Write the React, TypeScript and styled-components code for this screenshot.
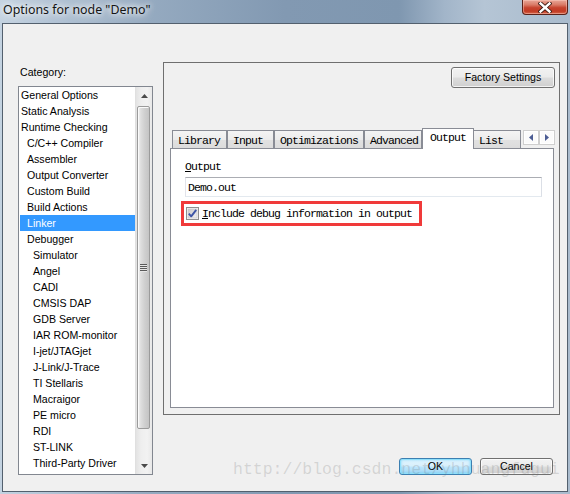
import React from "react";
import styled, { createGlobalStyle, css } from "styled-components";

const Global = createGlobalStyle`
  html, body { margin: 0; padding: 0; width: 570px; height: 494px; overflow: hidden; background: #a9bccf; }
  *, *::before, *::after { box-sizing: border-box; }
`;

const UI = `"Liberation Sans", Arial, sans-serif`;
const MONO = `"Liberation Mono", "Courier New", monospace`;

const Window = styled.div`
  position: relative;
  width: 570px;
  height: 494px;
  display: flex;
  flex-direction: column;
  padding: 0 2px 2px 2px;
  background: linear-gradient(
    90deg,
    #c4d3e1 0%,
    #b1c2d4 10%,
    #95aac0 26%,
    #8299b2 50%,
    #7f97b0 70%,
    #a2b5c9 78%,
    #b5c5d5 85%,
    #a9bbcd 100%
  );
`;

const TitleBar = styled.div`
  height: 23px;
  flex: none;
  display: flex;
  justify-content: space-between;
  align-items: flex-start;
`;

const Title = styled.div`
  padding-left: 1px;
  font-family: "Noto Sans", sans-serif;
  font-size: 12.4px;
  line-height: 20px;
  color: #151515;
  text-shadow: 0 0 8px #fff, 0 0 5px rgba(255, 255, 255, 0.9), 0 0 14px rgba(255, 255, 255, 0.7);
`;

const CloseButton = styled.div`
  width: 46px;
  height: 15px;
  display: flex;
  align-items: center;
  justify-content: center;
  border: 1px solid #5a2119;
  border-top: none;
  border-radius: 0 0 4px 4px;
  background: linear-gradient(180deg, #e9a798 0%, #d97a66 35%, #c7442f 55%, #c13b24 80%, #d8674b 100%);
  box-shadow: inset 0 0 0 1px rgba(255, 210, 200, 0.45);
`;

const Client = styled.div`
  flex: 1;
  display: flex;
  align-items: flex-start;
  gap: 10px;
  padding: 38px 7px 0 15px;
  background: #f0f0f0;
  border: 1px solid #53606e;
`;

const LeftCol = styled.div`
  width: 135px;
  flex: none;
  display: flex;
  flex-direction: column;
`;

const CategoryLabel = styled.div`
  height: 24px;
  padding: 3px 0 0 2px;
  font-family: ${UI};
  font-size: 10.6px;
  line-height: 14px;
  color: #000;
`;

const ListBox = styled.div`
  height: 389px;
  display: flex;
  background: #fff;
  border: 1px solid #828790;
`;

const Items = styled.div`
  flex: 1;
  overflow: hidden;
`;

const Item = styled.div<{ $level: number; $selected?: boolean }>`
  height: 16px;
  margin-left: 1px;
  padding-left: ${(p) => 1 + p.$level * 6}px;
  font-family: ${UI};
  font-size: 10.6px;
  line-height: 16px;
  white-space: nowrap;
  color: #000;
  ${(p) =>
    p.$selected &&
    css`
      background: #3399ff;
      color: #fff;
    `}
`;

const ScrollBar = styled.div`
  width: 17px;
  flex: none;
  display: flex;
  flex-direction: column;
  background: linear-gradient(90deg, #e3e3e3 0%, #eeeeee 30%, #f2f2f2 70%, #e8e8e8 100%);
  border-left: 1px solid #e0e0e0;
`;

const ScrollArrow = styled.div`
  height: 17px;
  flex: none;
  display: flex;
  align-items: center;
  justify-content: center;
`;

const Thumb = styled.div`
  height: 323px;
  margin: 2px 2px 0 1px;
  display: flex;
  align-items: center;
  justify-content: center;
  border: 1px solid #9b9b9b;
  border-radius: 2px;
  background: linear-gradient(90deg, #f4f4f4 0%, #dedede 25%, #d0d0d0 60%, #c4c4c4 100%);
  box-shadow: inset 1px 1px 0 #fafafa;
`;

const Grip = styled.div`
  width: 7px;
  height: 8px;
  background: repeating-linear-gradient(180deg, #5a5a5a 0px, #5a5a5a 1px, #e6e6e6 1px, #e6e6e6 2px);
`;

const Spacer = styled.div`
  flex: 1;
`;

const RightCol = styled.div`
  width: 397px;
  flex: none;
  display: flex;
  flex-direction: column;
`;

const GroupBox = styled.div`
  height: 353px;
  display: flex;
  flex-direction: column;
  padding: 4px 5px 6px 6px;
  border: 1px solid #6f6f6f;
`;

const PushButton = styled.button<{ $default?: boolean; $w: number; $h: number }>`
  width: ${(p) => p.$w}px;
  height: ${(p) => p.$h}px;
  padding: 0;
  font-family: ${UI};
  font-size: 10.6px;
  line-height: 1;
  color: #000;
  border: 1px solid #707070;
  border-radius: 3px;
  background: linear-gradient(180deg, #f2f2f2 0%, #ebebeb 48%, #dddddd 52%, #cfcfcf 100%);
  box-shadow: inset 0 0 0 1px rgba(255, 255, 255, 0.75);
  ${(p) =>
    p.$default &&
    css`
      border-color: #3c7fb1;
      background: linear-gradient(180deg, #e5f5fd 0%, #d6effc 48%, #bde5fc 52%, #a6d9f4 100%);
      box-shadow: inset 0 0 0 1px #8fe0fb, inset 0 0 3px 1px rgba(80, 200, 250, 0.6);
    `}
`;

const FactoryButton = styled(PushButton)`
  align-self: flex-end;
  margin-right: -1px;
`;

const TabArea = styled.div`
  margin-top: 40px;
  display: flex;
  flex-direction: column;
`;

const TabStrip = styled.div`
  position: relative;
  height: 20px;
  display: flex;
  align-items: flex-start;
  padding-left: 2px;
`;

const Tab = styled.div<{ $w: number; $active?: boolean }>`
  width: ${(p) => p.$w}px;
  height: 18px;
  margin-top: 2px;
  padding: 3px 0 0 5px;
  font-family: ${MONO};
  font-size: 11.5px;
  letter-spacing: -0.9px;
  line-height: 14px;
  color: #000;
  white-space: nowrap;
  overflow: hidden;
  border: 1px solid #898c95;
  border-bottom: none;
  background: linear-gradient(180deg, #f4f4f4 0%, #ececec 50%, #e1e1e1 51%, #dcdcdc 100%);
  ${(p) =>
    p.$active &&
    css`
      position: relative;
      z-index: 2;
      height: 21px;
      margin-top: 0;
      margin-right: -1px;
      padding: 2px 0 0 7px;
      background: #fff;
    `}
`;

const TabArrows = styled.div`
  position: absolute;
  top: 2px;
  right: -1px;
  display: flex;
  gap: 0;
  padding-left: 2px;
  background: #f0f0f0;
`;

const TabArrow = styled.div`
  width: 16px;
  height: 15px;
  display: flex;
  align-items: center;
  justify-content: center;
  border: 1px solid #cfcfcf;
  background: #fbfbfb;
  box-shadow: inset 0 0 0 1px #ffffff;
`;

const TabPage = styled.div`
  position: relative;
  z-index: 1;
  height: 260px;
  display: flex;
  flex-direction: column;
  align-items: flex-start;
  padding: 12px 0 0 10px;
  background: #fff;
  border: 1px solid #898c95;
`;

const FieldLabel = styled.div`
  margin-left: 4px;
  height: 12px;
  font-family: ${MONO};
  font-size: 11.5px;
  letter-spacing: -0.9px;
  line-height: 12px;
  color: #000;
`;

const TextInput = styled.div`
  width: 357px;
  height: 20px;
  margin: 4px 0 0 4px;
  padding: 3px 0 0 2px;
  font-family: ${MONO};
  font-size: 11.5px;
  letter-spacing: -0.9px;
  line-height: 13px;
  color: #000;
  border: 1px solid;
  border-color: #abadb3 #dbdfe6 #e3e9ef #e2e3ea;
  background: #fff;
`;

const Highlight = styled.div`
  width: 241px;
  height: 25px;
  margin-top: 4px;
  display: flex;
  align-items: center;
  gap: 3px;
  padding-left: 2px;
  border: 3px solid #f03a3a;
`;

const CheckLabel = styled.span`
  font-family: ${MONO};
  font-size: 11.5px;
  letter-spacing: -0.9px;
  line-height: 14px;
  color: #000;
  white-space: nowrap;
`;

const ButtonRow = styled.div`
  margin-top: 43px;
  display: flex;
  justify-content: flex-end;
  gap: 8px;
  padding-right: 7px;
`;

const Watermark = styled.div`
  position: absolute;
  left: 233px;
  top: 461px;
  font-family: ${MONO};
  font-size: 16.5px;
  line-height: 18px;
  color: rgba(110, 110, 110, 0.22);
  white-space: nowrap;
  pointer-events: none;
`;

const categories: [string, number, boolean?][] = [
  ["General Options", 0],
  ["Static Analysis", 0],
  ["Runtime Checking", 0],
  ["C/C++ Compiler", 1],
  ["Assembler", 1],
  ["Output Converter", 1],
  ["Custom Build", 1],
  ["Build Actions", 1],
  ["Linker", 1, true],
  ["Debugger", 1],
  ["Simulator", 2],
  ["Angel", 2],
  ["CADI", 2],
  ["CMSIS DAP", 2],
  ["GDB Server", 2],
  ["IAR ROM-monitor", 2],
  ["I-jet/JTAGjet", 2],
  ["J-Link/J-Trace", 2],
  ["TI Stellaris", 2],
  ["Macraigor", 2],
  ["PE micro", 2],
  ["RDI", 2],
  ["ST-LINK", 2],
  ["Third-Party Driver", 2],
];

const tabs: [string, number, boolean?][] = [
  ["Library", 55],
  ["Input", 47],
  ["Optimizations", 90],
  ["Advanced", 58],
  ["Output", 52, true],
  ["List", 48],
];

const CloseGlyph = () => (
  <svg width="14" height="11" viewBox="0 0 14 11">
    <path d="M2.5 1.5 L11.5 9.5 M11.5 1.5 L2.5 9.5" stroke="#3a1a14" strokeWidth="4.2" strokeLinecap="square" />
    <path d="M2.5 1.5 L11.5 9.5 M11.5 1.5 L2.5 9.5" stroke="#ffffff" strokeWidth="2.4" strokeLinecap="square" />
  </svg>
);

const UpArrow = () => (
  <svg width="7" height="4" viewBox="0 0 7 4">
    <path d="M3.5 0 L7 4 L0 4 Z" fill="#4a4a4a" />
  </svg>
);

const DownArrow = () => (
  <svg width="7" height="4" viewBox="0 0 7 4">
    <path d="M0 0 L7 0 L3.5 4 Z" fill="#4a4a4a" />
  </svg>
);

const LeftTri = () => (
  <svg width="4" height="7" viewBox="0 0 4 7">
    <path d="M4 0 L4 7 L0 3.5 Z" fill="#4b5c93" />
  </svg>
);

const RightTri = () => (
  <svg width="4" height="7" viewBox="0 0 4 7">
    <path d="M0 0 L4 3.5 L0 7 Z" fill="#4b5c93" />
  </svg>
);

const CheckBox = () => (
  <svg width="13" height="13" viewBox="0 0 13 13">
    <defs>
      <linearGradient id="cbg" x1="0" y1="0" x2="1" y2="1">
        <stop offset="0" stopColor="#c9c9c9" />
        <stop offset="1" stopColor="#f2f2f2" />
      </linearGradient>
    </defs>
    <rect x="0.5" y="0.5" width="12" height="12" fill="#f6f6f6" stroke="#8e8f8f" />
    <rect x="2" y="2" width="9" height="9" fill="url(#cbg)" stroke="#c2c4c8" strokeWidth="0.6" />
    <path d="M2.8 6.6 L5.2 9.3 L10.2 2.8" fill="none" stroke="#3d55a6" strokeWidth="1.9" strokeLinejoin="round" />
  </svg>
);

export default function App() {
  return (
    <>
      <Global />
      <Window>
        <TitleBar>
          <Title>Options for node "Demo"</Title>
          <CloseButton>
            <CloseGlyph />
          </CloseButton>
        </TitleBar>
        <Client>
          <LeftCol>
            <CategoryLabel>Category:</CategoryLabel>
            <ListBox>
              <Items>
                {categories.map(([name, level, sel]) => (
                  <Item key={name} $level={level} $selected={sel}>
                    {name}
                  </Item>
                ))}
              </Items>
              <ScrollBar>
                <ScrollArrow>
                  <UpArrow />
                </ScrollArrow>
                <Thumb>
                  <Grip />
                </Thumb>
                <Spacer />
                <ScrollArrow>
                  <DownArrow />
                </ScrollArrow>
              </ScrollBar>
            </ListBox>
          </LeftCol>
          <RightCol>
            <GroupBox>
              <FactoryButton $w={104} $h={21}>
                Factory Settings
              </FactoryButton>
              <TabArea>
                <TabStrip>
                  {tabs.map(([name, w, active]) => (
                    <Tab key={name} $w={w} $active={active}>
                      {name}
                    </Tab>
                  ))}
                  <TabArrows>
                    <TabArrow>
                      <LeftTri />
                    </TabArrow>
                    <TabArrow>
                      <RightTri />
                    </TabArrow>
                  </TabArrows>
                </TabStrip>
                <TabPage>
                  <FieldLabel>
                    <u>O</u>utput
                  </FieldLabel>
                  <TextInput>Demo.out</TextInput>
                  <Highlight>
                    <CheckBox />
                    <CheckLabel>
                      <u>I</u>nclude debug information in output
                    </CheckLabel>
                  </Highlight>
                </TabPage>
              </TabArea>
            </GroupBox>
            <ButtonRow>
              <PushButton $default $w={73} $h={17}>
                OK
              </PushButton>
              <PushButton $w={73} $h={17}>
                Cancel
              </PushButton>
            </ButtonRow>
          </RightCol>
        </Client>
        <Watermark>http://blog.csdn.net/yhhuangfugui</Watermark>
      </Window>
    </>
  );
}
